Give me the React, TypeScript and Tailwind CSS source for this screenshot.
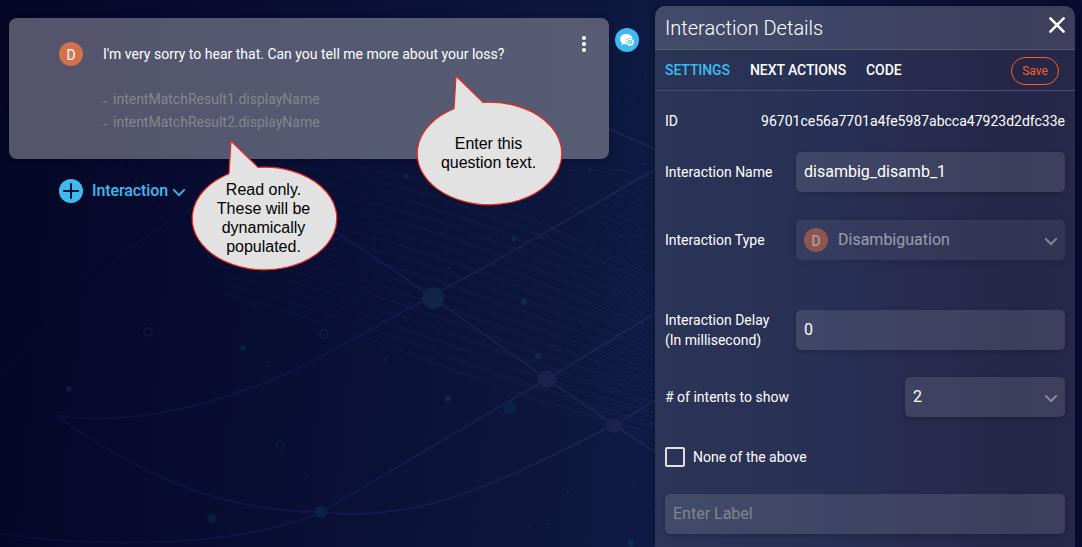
import type { ReactNode } from "react";

const dots: [number, number, number, string][] = [
  [69, 389, 3, "#0a1d42"], [243, 348, 3, "#0a1e42"], [212, 518, 4.5, "#0a1e42"], [321, 512, 6, "#0b2244"],
  [448, 399, 2.8, "#1a2450"], [524, 302, 3, "#10294f"], [538, 356, 3.2, "#10294f"], [510, 408, 7, "#0d2047"],
  [406, 176, 2.6, "#0d2448"], [514, 239, 2.5, "#0d284c"], [646, 75, 2, "#10244c"], [651, 424, 2.2, "#102b52"],
  [631, 543, 3.5, "#102b52"], [590, 170, 1.8, "#12284f"], [374, 240, 1.5, "#0f2246"], [442, 233, 1.5, "#0f2246"],
  [449, 268, 1.5, "#0f2246"], [568, 350, 1.8, "#10264e"], [643, 164, 1.8, "#14264e"], [474, 512, 1.5, "#10234a"],
  [529, 526, 1.5, "#10234a"], [549, 524, 1.5, "#10234a"], [633, 481, 1.5, "#13254c"], [650, 504, 1.5, "#13254c"],
  [385, 360, 1.7, "#102146"], [504, 438, 1.5, "#102146"], [579, 445, 1.5, "#13254c"], [568, 493, 1.5, "#13254c"],
  [294, 306, 1.5, "#0b1d40"], [268, 362, 1.5, "#0b1d40"], [253, 305, 1.5, "#0b1d40"], [305, 473, 1.3, "#0b1d40"],
  [120, 165, 2, "#080f38"],
];

const rings: [number, number, number][] = [[148, 332, 4], [280, 445, 4], [324, 334, 4], [493, 238, 4], [625, 102, 8.5]];

const strands = Array.from({ length: 16 }, (_, i) => i);

function Backdrop() {
  return (
    <svg className="absolute inset-0" width="1082" height="547" viewBox="0 0 1082 547" fill="none" aria-hidden="true">
      <defs>
        <linearGradient id="strand" x1="150" y1="0" x2="680" y2="0" gradientUnits="userSpaceOnUse">
          <stop stopColor="#1b2a78" stopOpacity="0" />
          <stop offset="0.5" stopColor="#22386f" stopOpacity="0.2" />
          <stop offset="1" stopColor="#34508a" stopOpacity="0.24" />
        </linearGradient>
        <linearGradient id="link" x1="0" y1="0" x2="700" y2="0" gradientUnits="userSpaceOnUse">
          <stop stopColor="#0d0f40" stopOpacity="0.7" />
          <stop offset="0.5" stopColor="#111a4e" />
          <stop offset="1" stopColor="#202a52" />
        </linearGradient>
      </defs>
      <g stroke="url(#strand)" strokeWidth="1">
        {strands.map((i) => (
          <g key={i}>
            <path d={`M180 ${150 + i * 9}C340 ${150 + i * 11} 460 ${175 + i * 14} 680 ${290 + i * 10}`} />
            <path d={`M200 ${154 + i * 9}C350 ${154 + i * 11} 465 ${178 + i * 14} 680 ${295 + i * 10}`} opacity="0.6" />
          </g>
        ))}
        {strands.slice(0, 8).map((i) => (
          <path key={i} d={`M${470 + i * 20} 170C${540 + i * 15} ${185 - i * 2} 600 ${215 - i * 6} 680 ${280 - i * 14}`} opacity="0.7" />
        ))}
      </g>
      <g stroke="url(#link)" strokeWidth="1.6">
        <path d="M0 375L105 268C150 230 210 192 310 150" opacity="0.5" />
        <path d="M55 415C120 425 200 412 290 372C350 344 420 300 480 270L680 155" />
        <path d="M55 415C150 482 230 512 321 512L547 379L690 292" />
        <path d="M0 534C100 548 240 548 321 512C430 525 520 470 614 425L690 380" />
        <path d="M330 228L395 271L433 298L547 379L614 425L690 475" />
        <path d="M600 125L680 160" />
      </g>
      {rings.map(([x, y, r]) => <circle key={`${x}-${y}`} cx={x} cy={y} r={r} stroke="#121d46" strokeWidth="1.3" />)}
      {dots.map(([x, y, r, fill]) => <circle key={`${x}-${y}`} cx={x} cy={y} r={r} fill={fill} />)}
      <circle cx="433" cy="298" r="11" fill="#102449" />
      <circle cx="547" cy="379" r="9" fill="#1b234c" />
      <circle cx="614" cy="425.500" r="7.500" fill="#1b234c" />
    </svg>
  );
}

function Badge() {
  return (
    <span className="flex size-6 shrink-0 items-center justify-center rounded-full bg-[#d4714b] pt-px text-[14px] leading-none text-white">D</span>
  );
}

function Chevron({ className }: { className: string }) {
  return (
    <svg className={className} width="14" height="9" viewBox="0 0 14 9" fill="none" stroke="currentColor" strokeWidth="1.800">
      <path d="M1.300 1.300L7 7.200L12.700 1.300" />
    </svg>
  );
}

function Callout({ className, lines }: { className: string; lines: string[] }) {
  return (
    <div className={`absolute h-[131px] w-[147px] ${className}`}>
      <svg className="absolute inset-0 overflow-visible" width="147" height="131" viewBox="0 0 147 131">
        <path d="M41 1L68 27.400A72.300 51.300 0 1 1 39 33.800Z" fill="#e2e2e2" stroke="#ee2a1c" strokeWidth="1.200" strokeLinejoin="round" />
      </svg>
      <div className="relative flex h-full flex-col items-center justify-center pt-[25px] font-['Liberation_Sans',sans-serif] text-[16px] leading-[19px] text-black">
        {lines.map((line) => <span key={line} className="whitespace-nowrap">{line}</span>)}
      </div>
    </div>
  );
}

function Field({ label, children }: { label: ReactNode; children: ReactNode }) {
  return (
    <div className="flex h-10 items-center justify-between text-[14px] leading-5 text-white">
      <span>{label}</span>
      {children}
    </div>
  );
}

const box = "flex h-10 items-center rounded-[5px] bg-white/11 px-2 text-[16px] shadow-[0_2px_5px_rgba(0,0,0,0.2)]";

export default function App() {
  return (
    <div className="relative h-[547px] w-[1082px] overflow-hidden bg-[linear-gradient(95deg,#040624_0%,#070a2e_15%,#0a1036_35%,#0d183f_55%,#0e1b45_62%,#0b1238_80%,#080c2f_100%)] font-[Roboto,sans-serif]">
      <Backdrop />
      <div className="relative flex h-full">
        <main className="w-[655px] pt-[18px] pl-[9px]">
          <div className="flex items-start">
            <section className="flex h-[141px] w-[600px] items-start rounded-[8px] bg-[linear-gradient(90deg,#54546b,#555a73_60%,#575b74)] pt-6 pr-[19px] pl-[50px] shadow-[0_1px_6px_rgba(0,0,0,0.2)]">
              <Badge />
              <div className="ml-5 flex-1">
                <p className="mt-0.5 text-[14px] leading-5 text-white">I'm very sorry to hear that. Can you tell me more about your loss?</p>
                <ul className="mt-6 text-[14px] leading-[23px] text-[#85868b]">
                  <li><span className="relative top-0.5 inline-block w-2.5">-</span>intentMatchResult1.displayName</li>
                  <li><span className="relative top-0.5 inline-block w-2.5">-</span>intentMatchResult2.displayName</li>
                </ul>
              </div>
              <svg className="-mt-2" width="12" height="20" viewBox="0 0 12 20" fill="white">
                <circle cx="6" cy="4" r="2.100" /><circle cx="6" cy="10" r="2.100" /><circle cx="6" cy="16" r="2.100" />
              </svg>
            </section>
            <svg className="mt-2.5 ml-1.5" width="24" height="24" viewBox="0 0 24 24">
              <circle cx="12" cy="12" r="12" fill="#3dbaf0" />
              <path d="M11.200 6C7.700 6 5 8.200 5 11.100C5 12.700 5.700 14 7 15L6.200 17.100L9 16C9.700 16.200 10.400 16.200 11.200 16.200C14.800 16.200 17.500 14 17.500 11.100S14.800 6 11.200 6Z" fill="white" />
              <circle cx="15" cy="14" r="4.300" fill="#3dbaf0" />
              <circle cx="15" cy="14" r="2.700" fill="none" stroke="white" strokeWidth="1.300" />
              <circle cx="15" cy="14" r="3.500" fill="none" stroke="white" strokeWidth="1.400" strokeDasharray="1.375 1.375" />
              <circle cx="15" cy="14" r="0.900" fill="white" />
            </svg>
          </div>
          <div className="mt-5 ml-[50px] flex h-6 items-center text-[#3dbaf0]">
            <svg width="24" height="24" viewBox="0 0 24 24">
              <circle cx="12" cy="12" r="12" fill="currentColor" />
              <path d="M12 4.200V19.800M4.200 12H19.800" stroke="#07092b" strokeWidth="2" />
            </svg>
            <span className="ml-[9px] text-[16px] font-medium leading-6 tracking-[-0.1px]">Interaction</span>
            <Chevron className="mt-0.5 ml-1" />
          </div>
        </main>
        <aside className="mt-1.5 h-[541px] w-[420px] overflow-hidden rounded-t-[10px] bg-[linear-gradient(90deg,#2b3557_0%,#282f54_45%,#262748_85%,#28284a_100%)] shadow-[0_0_8px_rgba(0,0,0,0.35)]">
          <header className="flex h-11 items-center justify-between border-b border-[#555a73] bg-white/11 px-2.5">
            <h1 className="text-[20px] font-light leading-7 text-white">Interaction Details</h1>
            <svg className="-mt-1.5" width="16" height="16" viewBox="0 0 16 16" stroke="white" strokeWidth="2.600" strokeLinecap="round">
              <path d="M1.400 1.400L14.600 14.600M14.600 1.400L1.400 14.600" />
            </svg>
          </header>
          <nav className="flex h-[41px] items-center gap-5 border-b border-[#474d6a] pr-4 pl-2.5 text-[14px] font-medium tracking-[-0.08px] text-white">
            <span className="text-[#3dbaf0]">SETTINGS</span>
            <span>NEXT ACTIONS</span>
            <span>CODE</span>
            <button className="mt-px ml-auto h-7 w-12 rounded-full border border-[#f26522] text-[12px] font-normal tracking-normal text-[#f26522]">Save</button>
          </nav>
          <form className="px-2.5 pt-2.5">
            <Field label="ID"><span>96701ce56a7701a4fe5987abcca47923d2dfc33e</span></Field>
            <div className="mt-[11px]">
              <Field label="Interaction Name"><div className={`${box} w-[269px]`}>disambig_disamb_1</div></Field>
            </div>
            <div className="mt-7">
              <Field label="Interaction Type">
                <div className={`${box} w-[269px] opacity-60`}>
                  <Badge />
                  <span className="ml-2.5 text-[#e4e4ea]">Disambiguation</span>
                  <Chevron className="mt-0.5 -mr-px ml-auto text-[#cfcfcf]" />
                </div>
              </Field>
            </div>
            <div className="mt-[50px]">
              <Field label={<>Interaction Delay<br />(In millisecond)</>}><div className={`${box} w-[269px]`}>0</div></Field>
            </div>
            <div className="mt-[27px]">
              <Field label="# of intents to show">
                <div className={`${box} w-40 justify-between`}>2<Chevron className="mt-0.5 -mr-px text-[#929292]" /></div>
              </Field>
            </div>
            <div className="mt-[30px] flex items-center gap-2 text-[14px] leading-5 text-white">
              <span className="size-5 rounded-[2px] border-2 border-[#dfe0e4]" />None of the above
            </div>
            <div className={`${box} mt-[27px] text-[#85858b]`}>Enter Label</div>
          </form>
        </aside>
      </div>
      <Callout className="top-[75px] left-[415px]" lines={["Enter this", "question text."]} />
      <Callout className="top-[140px] left-[190px]" lines={["Read only.", "These will be", "dynamically", "populated."]} />
    </div>
  );
}
